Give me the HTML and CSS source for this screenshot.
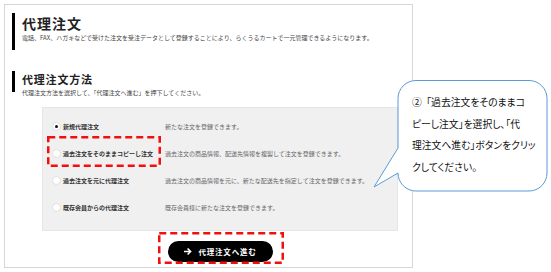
FILE: index.html
```html
<!DOCTYPE html>
<html lang="ja">
<head>
    <meta charset="UTF-8">
    <meta name="viewport" content="width=device-width, initial-scale=1.0">
    <title>代理注文</title>
    <link rel="stylesheet" href="styles.css">
</head>
<body>
    <div class="panel">
        <div class="sec-head">
            <h1 class="sec-title">代理注文</h1>
            <p class="sec-desc">電話、FAX、ハガキなどで受けた注文を受注データとして登録することにより、らくうるカートで一元管理できるようになります。</p>
        </div>

        <h2 class="sub-title">代理注文方法</h2>
        <p class="sub-desc">代理注文方法を選択して、「代理注文へ進む」を押下してください。</p>

        <div class="methods">
            <div class="method">
                <span class="radio checked"></span>
                <span class="method-name">新規代理注文</span>
                <span class="method-desc">新たな注文を登録できます。</span>
            </div>
            <div class="method">
                <span class="radio"></span>
                <span class="method-name">過去注文をそのままコピーし注文</span>
                <span class="method-desc">過去注文の商品情報、配送先情報を複製して注文を登録できます。</span>
                <!-- annotation -->
                <svg class="mark mark-method" width="114" height="31" viewBox="0 0 114 31">
                    <rect x="1.25" y="1.25" width="111.5" height="28.5" fill="none" stroke="#f10f0f" stroke-width="2.5" stroke-dasharray="7 4"/>
                </svg>
            </div>
            <div class="method">
                <span class="radio"></span>
                <span class="method-name">過去注文を元に代理注文</span>
                <span class="method-desc">過去注文の商品情報を元に、新たな配送先を指定して注文を登録できます。</span>
            </div>
            <div class="method">
                <span class="radio"></span>
                <span class="method-name">既存会員からの代理注文</span>
                <span class="method-desc">既存会員様に新たな注文を登録できます。</span>
            </div>
        </div>

        <div class="actions">
            <div class="btn-wrap">
                <button class="btn-next">
                    <svg width="9" height="9" viewBox="0 0 9 9">
                        <path d="M1 4.5H7.5M4.6 1.5L7.6 4.5L4.6 7.5" fill="none" stroke="#fff" stroke-width="1.6"/>
                    </svg>
                    <span>代理注文へ進む</span>
                </button>
                <svg class="mark mark-btn" width="126" height="32" viewBox="0 0 126 32">
                    <rect x="1.25" y="1.25" width="123.5" height="29.5" fill="none" stroke="#f10f0f" stroke-width="2.5" stroke-dasharray="7 4"/>
                </svg>
            </div>
        </div>
    </div>

    <div class="callout">
        <svg class="callout-shape" width="178" height="116" viewBox="0 0 178 116">
            <path d="M44 2.5H157A18 18 0 0 1 175 20.5V95A18 18 0 0 1 157 113H44A18 18 0 0 1 26 95L2 109L26 70V20.5A18 18 0 0 1 44 2.5Z" fill="#fff" stroke="#5b9bd5" stroke-width="1"/>
        </svg>
        <p class="callout-text">②&nbsp;&nbsp;「過去注文をそのままコ<br>ピーし注文」を選択し、「代<br>理注文へ進む」ボタンをクリッ<br>クしてください。</p>
    </div>
</body>
</html>
```

FILE: styles.css
```css
body {
    margin: 0;
    font-family: "Noto Sans CJK JP", "Noto Sans", sans-serif;
    background: #fff;
    color: #222;
}
.panel {
    margin: 4px 0 0 4px;
    width: 407px;
    height: 262px;
    border: 1px solid #d6d6d6;
}
.sec-head {
    margin: 8px 0 0 7px;
    height: 37px;
    padding-left: 7px;
    border-left: 3px solid #000;
}
.sec-title {
    margin: 2px 0 0;
    font-size: 14px;
    line-height: 20px;
    font-weight: bold;
    letter-spacing: 1px;
}
.sec-desc {
    margin: 0;
    font-size: 6px;
    line-height: 10px;
    color: #444;
    white-space: nowrap;
}
.sub-title {
    margin: 21px 0 0 7px;
    height: 21px;
    padding-left: 7px;
    border-left: 3px solid #000;
    font-size: 11px;
    line-height: 16px;
    font-weight: bold;
    letter-spacing: 0.8px;
}
.sub-desc {
    margin: -4px 0 0 17px;
    font-size: 6px;
    line-height: 10px;
    color: #444;
}
.methods {
    box-sizing: border-box;
    margin: 9px 0 0 37px;
    width: 356px;
    height: 124px;
    padding-top: 5px;
    background: #f0f0f0;
    border: 1px solid #e6e6e6;
}
.method {
    position: relative;
    display: flex;
    align-items: center;
    height: 27px;
    padding-left: 9px;
}
.radio {
    box-sizing: border-box;
    width: 9px;
    height: 9px;
    margin-right: 2px;
    border-radius: 50%;
    background: #fff;
    border: 1px solid #e0e0e0;
    display: flex;
    align-items: center;
    justify-content: center;
}
.radio.checked::after {
    content: "";
    width: 3px;
    height: 3px;
    border-radius: 50%;
    background: #111;
}
.method-name {
    width: 102px;
    font-size: 6px;
    font-weight: bold;
    color: #333;
    white-space: nowrap;
}
.method-desc {
    font-size: 6px;
    color: #666;
    white-space: nowrap;
}
.mark {
    position: absolute;
}
.mark-method {
    left: 4px;
    top: -4px;
}
.actions {
    margin-left: 37px;
    width: 356px;
    padding-top: 10px;
    display: flex;
    justify-content: center;
}
.btn-wrap {
    position: relative;
}
.btn-next {
    width: 105px;
    height: 21px;
    border: none;
    border-radius: 11px;
    background: #000;
    color: #fff;
    font-family: inherit;
    font-size: 7.5px;
    font-weight: bold;
    letter-spacing: 0.8px;
    display: flex;
    align-items: center;
    justify-content: center;
    gap: 6px;
    padding: 0;
}
.mark-btn {
    left: -10px;
    top: -9px;
}
.callout {
    position: absolute;
    left: 372px;
    top: 78px;
    width: 178px;
    height: 116px;
}
.callout-shape {
    position: absolute;
    left: 0;
    top: 0;
}
.callout-text {
    position: relative;
    margin: 0;
    padding: 14px 0 0 40px;
    font-size: 9.8px;
    line-height: 21.7px;
    font-feature-settings: "palt";
    color: #111;
    white-space: nowrap;
}
```
